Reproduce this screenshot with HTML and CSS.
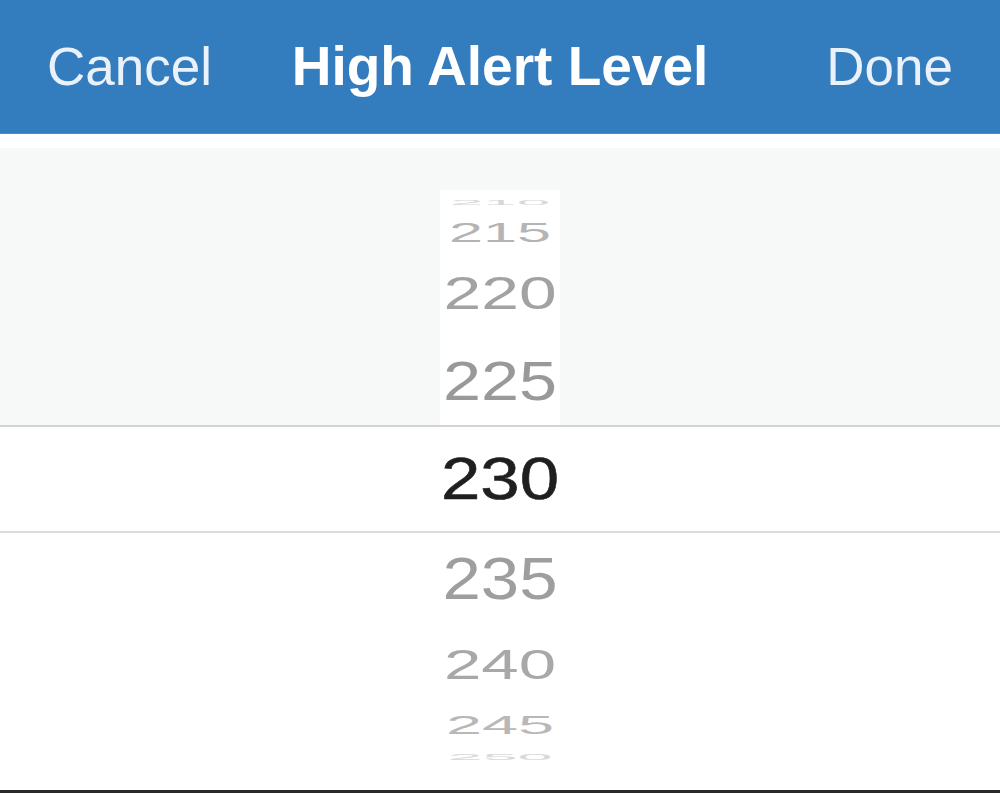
FILE: index.html
```html
<!DOCTYPE html>
<html lang="en">
<head>
<meta charset="utf-8">
<title>High Alert Level</title>
<link rel="stylesheet" href="styles.css">
</head>
<body>
<div class="screen">
  <header class="navbar">
    <span class="nav-btn nav-cancel">Cancel</span>
    <span class="nav-title">High Alert Level</span>
    <span class="nav-btn nav-done">Done</span>
  </header>
  <div class="gap"></div>
  <section class="picker">
    <div class="upper">
      <div class="col col-upper">
        <div class="pad-top"></div>
        <div class="row h26"><span class="num n210">210</span></div>
        <div class="row h34"><span class="num n215">215</span></div>
        <div class="row h87"><span class="num n220">220</span></div>
        <div class="row h88"><span class="num n225">225</span></div>
      </div>
    </div>
    <div class="selected">
      <span class="num n230">230</span>
    </div>
    <div class="lower">
      <div class="col">
        <div class="row h91"><span class="num n235">235</span></div>
        <div class="row h82"><span class="num n240">240</span></div>
        <div class="row h40"><span class="num n245">245</span></div>
        <div class="row h22"><span class="num n250">250</span></div>
      </div>
    </div>
  </section>
  <div class="bottom-rule"></div>
</div>
</body>
</html>
```

FILE: styles.css
```css
* { box-sizing: border-box; }

html, body {
  margin: 0;
  padding: 0;
  background: #ffffff;
}

body {
  font-family: "Liberation Sans", Arial, sans-serif;
}

.screen {
  width: 1000px;
  height: 794px;
  display: flex;
  flex-direction: column;
  overflow: hidden;
}

.navbar {
  height: 134px;
  flex: 0 0 134px;
  background: #337cbd;
  display: grid;
  grid-template-columns: 1fr auto 1fr;
  align-items: center;
  padding: 0 47px 0 47px;
  color: #ffffff;
  border-bottom: 1px solid #4f8dc6;
  box-shadow: 0 1px 1px rgba(160, 195, 230, 0.5);
}

.nav-btn {
  font-size: 53px;
  line-height: 1;
  font-weight: 400;
  color: #eaf1f9;
}

.nav-cancel { justify-self: start; }
.nav-done { justify-self: end; }

.nav-title {
  font-size: 55px;
  line-height: 1;
  font-weight: 700;
  color: #ffffff;
  justify-self: center;
}

.gap {
  height: 14px;
  flex: 0 0 14px;
  background: #ffffff;
}

.picker {
  flex: 1 1 auto;
  display: flex;
  flex-direction: column;
}

.upper {
  height: 277px;
  flex: 0 0 277px;
  background: #f7f8f8;
  display: flex;
  justify-content: center;
}

.col {
  width: 120px;
  display: flex;
  flex-direction: column;
}

.col-upper {
  background: #ffffff;
}

.pad-top { height: 42px; flex: 0 0 42px; background: #f7f8f8; }

.row {
  display: flex;
  align-items: center;
  justify-content: center;
  overflow: visible;
}

.h26 { height: 26px; }
.h34 { height: 34px; }
.h87 { height: 87px; }
.h88 { height: 88px; }
.h91 { height: 91px; }
.h82 { height: 82px; }
.h40 { height: 40px; }
.h22 { height: 22px; }

.num {
  display: block;
  font-size: 60px;
  line-height: 60px;
  height: 60px;
  font-weight: 400;
  transform-origin: 50% 50%;
  white-space: nowrap;
}

.n210 { color: #d8d8d8; transform: scale(1.0, 0.12); }
.n215 { color: #b4b4b4; transform: scale(1.02, 0.47); }
.n220 { color: #a2a2a2; transform: scale(1.13, 0.77); }
.n225 { color: #999999; transform: scale(1.14, 0.93); }
.n230 { color: #1f1f1f; transform: scale(1.18, 1.0); -webkit-text-stroke: 0.6px #1f1f1f; }
.n235 { color: #9e9e9e; transform: scale(1.15, 0.98); }
.n240 { color: #a8a8a8; transform: scale(1.12, 0.70); }
.n245 { color: #b8b8b8; transform: scale(1.08, 0.42); }
.n250 { color: #dadada; transform: scale(1.05, 0.14); }

.selected {
  height: 108px;
  flex: 0 0 108px;
  border-top: 2px solid #d3d3d3;
  border-bottom: 2px solid #dcdcdc;
  background: #ffffff;
  display: flex;
  align-items: center;
  justify-content: center;
}

.lower {
  flex: 1 1 auto;
  background: #ffffff;
  display: flex;
  justify-content: center;
}

.bottom-rule {
  height: 4px;
  flex: 0 0 4px;
  border-top: 3px solid #2a2a2a;
  background: #ffffff;
}
```
